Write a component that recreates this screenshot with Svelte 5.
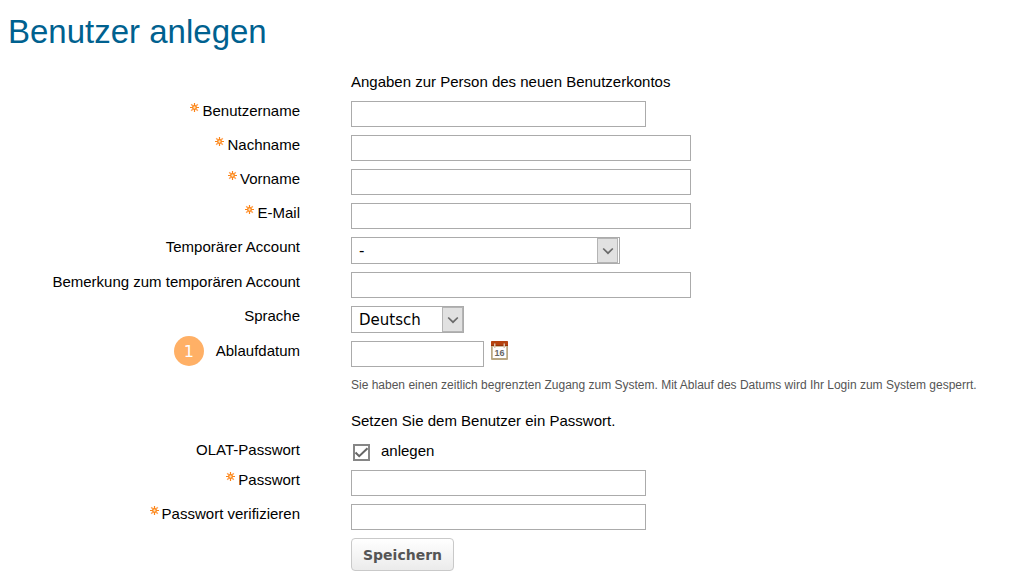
<script>
  let username = $state('');
  let lastName = $state('');
  let firstName = $state('');
  let email = $state('');
  let temporary = $state('-');
  let remark = $state('');
  let language = $state('Deutsch');
  let expiry = $state('');
  let createPassword = $state(true);
  let password = $state('');
  let passwordRepeat = $state('');
</script>

{#snippet star()}
  <svg class="star" viewBox="0 0 9 9" aria-hidden="true">
    <path d="M1.2 1.2l6.6 6.6M7.8 1.2L1.2 7.8" stroke="#ffa559" stroke-width="1.5" />
    <path d="M4.5 0v9M0 4.5h9" stroke="#fb8416" stroke-width="1.2" />
    <circle cx="4.5" cy="4.5" r="1.8" fill="#ffe3b8" stroke="#fb8416" stroke-width="1.2" />
  </svg>
{/snippet}

{#snippet arrow()}
  <span class="arrow" aria-hidden="true">
    <svg viewBox="0 0 12 8"><path d="M1.2 1.5L6 6.2l4.8-4.7" fill="none" stroke="#6a6a6a" stroke-width="1.7" /></svg>
  </span>
{/snippet}

<main>
  <h1>Benutzer anlegen</h1>

  <form onsubmit={(event) => event.preventDefault()}>
    <p class="intro">Angaben zur Person des neuen Benutzerkontos</p>

    <label class="name" for="username">{@render star()}Benutzername</label>
    <input class="text medium" id="username" type="text" bind:value={username} />

    <label class="name" for="lastname">{@render star()}Nachname</label>
    <input class="text wide" id="lastname" type="text" bind:value={lastName} />

    <label class="name" for="firstname">{@render star()}Vorname</label>
    <input class="text wide" id="firstname" type="text" bind:value={firstName} />

    <label class="name" for="email">{@render star()}E-Mail</label>
    <input class="text wide" id="email" type="email" bind:value={email} />

    <label class="name" for="temporary">Temporärer Account</label>
    <div class="select account">
      <select id="temporary" bind:value={temporary}>
        <option>-</option>
      </select>
      {@render arrow()}
    </div>

    <label class="name" for="remark">Bemerkung zum temporären Account</label>
    <input class="text wide" id="remark" type="text" bind:value={remark} />

    <label class="name" for="language">Sprache</label>
    <div class="select language">
      <select id="language" bind:value={language}>
        <option>Deutsch</option>
      </select>
      {@render arrow()}
    </div>

    <label class="name" for="expiry"><span class="marker">1</span>Ablaufdatum</label>
    <div class="date">
      <input class="text" id="expiry" type="text" bind:value={expiry} />
      <button class="calendar" type="button" aria-label="Kalender">
        <svg viewBox="0 0 17 19" aria-hidden="true">
          <rect width="17" height="19" rx="1" fill="#b9a883" />
          <rect x="1" y="5" width="15" height="12" fill="#cdbf9f" />
          <path d="M0 1a1 1 0 0 1 1-1h15a1 1 0 0 1 1 1v4H0z" fill="#b5430f" />
          <path d="M0 4h17v1H0z" fill="#973409" />
          <rect x="2" y="6" width="13" height="11" fill="#fff" />
          <path d="M3 2.500h1.500V7H3zM12.500 2.500H14V7h-1.500z" fill="#dcc5b0" />
          <text x="8.5" y="15" text-anchor="middle">16</text>
        </svg>
      </button>
    </div>

    <p class="hint">Sie haben einen zeitlich begrenzten Zugang zum System. Mit Ablauf des Datums wird Ihr Login zum System gesperrt.</p>

    <p class="intro">Setzen Sie dem Benutzer ein Passwort.</p>

    <span class="name" id="olat">OLAT-Passwort</span>
    <div class="check" role="group" aria-labelledby="olat">
      <input id="create" type="checkbox" bind:checked={createPassword} />
      <label for="create">anlegen</label>
    </div>

    <label class="name" for="password">{@render star()}Passwort</label>
    <input class="text medium" id="password" type="password" bind:value={password} />

    <label class="name" for="repeat">{@render star()}Passwort verifizieren</label>
    <input class="text medium" id="repeat" type="password" bind:value={passwordRepeat} />

    <button class="save" type="submit">Speichern</button>
  </form>
</main>

<style>
  :global(body) {
    margin: 0;
    background: #fff;
  }
  main {
    padding: 12px 8px 15px;
    color: #000;
    font: 15px/20px "Liberation Sans", Arial, sans-serif;
  }
  h1 {
    margin: 0 0 20px;
    color: #00618f;
    font-size: 33px;
    line-height: 40px;
    font-weight: 400;
  }
  form {
    display: grid;
    grid-template-columns: 292px minmax(0, 1fr);
    column-gap: 51px;
    row-gap: 8px;
    align-items: start;
    justify-items: start;
  }
  p {
    grid-column: 2;
    margin: 0;
  }
  .intro {
    min-height: 21px;
  }
  .hint {
    margin-bottom: 8px;
    color: #555;
    font-size: 12px;
  }
  .name {
    display: flex;
    justify-self: end;
    align-items: center;
    height: 20px;
  }
  .star {
    width: 9px;
    height: 9px;
    margin: 0 3px 7px 0;
  }
  .marker {
    display: flex;
    flex: none;
    align-items: center;
    justify-content: center;
    width: 30px;
    height: 30px;
    margin-right: 12px;
    border-radius: 50%;
    background: #ffb066;
    color: #fff;
    font: 16px "DejaVu Sans", Verdana, sans-serif;
  }
  .text {
    box-sizing: border-box;
    height: 26px;
    max-width: 100%;
    margin: 0;
    padding: 2px 6px;
    border: 1px solid #ababab;
    border-radius: 0;
    background: #fff;
    font: inherit;
  }
  .wide {
    width: 340px;
  }
  .medium {
    width: 295px;
  }
  .select {
    position: relative;
    box-sizing: border-box;
    height: 27px;
    max-width: 100%;
    border: 1px solid #ababab;
  }
  .account {
    width: 269px;
  }
  .language {
    width: 113px;
  }
  select {
    appearance: none;
    display: block;
    width: 100%;
    height: 100%;
    margin: 0;
    padding: 0 24px 0 7px;
    border: 0;
    border-radius: 0;
    background: #fff;
    color: #000;
    font: 15px "DejaVu Sans", Verdana, sans-serif;
  }
  .arrow {
    position: absolute;
    top: 0;
    right: 0;
    bottom: 0;
    display: flex;
    align-items: center;
    justify-content: center;
    box-sizing: border-box;
    width: 21px;
    border: 1px solid #b4b4b4;
    background: #e1e1e1;
    pointer-events: none;
  }
  .account .arrow {
    right: 1px;
  }
  .arrow svg {
    width: 12px;
    height: 8px;
  }
  .date {
    display: flex;
    align-items: start;
    gap: 7px;
  }
  .date .text {
    width: 133px;
  }
  .calendar {
    padding: 0;
    border: 0;
    background: none;
  }
  .calendar svg {
    display: block;
    width: 17px;
    height: 19px;
  }
  .calendar text {
    fill: #666;
    font: bold 9px "Liberation Sans", sans-serif;
  }
  .check {
    display: flex;
    align-items: center;
    gap: 11px;
    height: 22px;
    padding-left: 2px;
  }
  .check input {
    appearance: none;
    box-sizing: border-box;
    width: 17px;
    height: 17px;
    margin: 3px 0 0;
    border: 2px solid #868686;
    background: #fff;
  }
  .check input:checked {
    background: #fff url("data:image/svg+xml,%3Csvg xmlns='http://www.w3.org/2000/svg' viewBox='0 0 13 13'%3E%3Cpath d='M.5 6.500l3.700 3.700L12.500 2.300' fill='none' stroke='%23666' stroke-width='2'/%3E%3C/svg%3E") center / 13px 13px no-repeat;
  }
  .save {
    grid-column: 2;
    height: 33px;
    padding: 0 11px;
    border: 1px solid #c9c9c9;
    border-radius: 4px;
    background: linear-gradient(#fff, #ebebeb);
    color: #555;
    font: bold 14px "DejaVu Sans", Verdana, sans-serif;
  }
</style>
